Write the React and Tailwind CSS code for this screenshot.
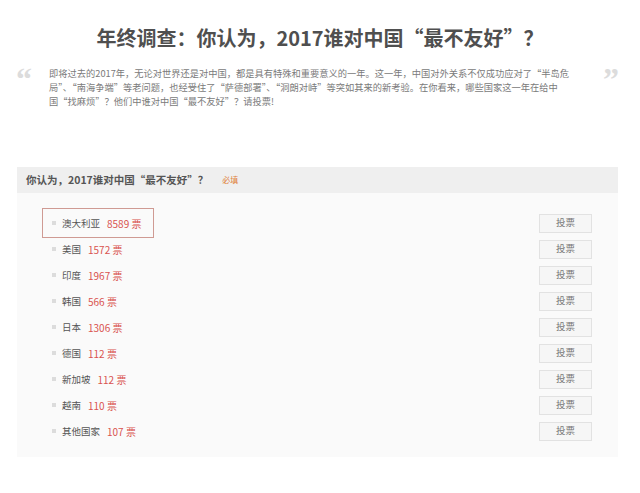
import React from "react";

const OPTIONS = [
  { name: "澳大利亚", votes: 8589, marked: true },
  { name: "美国", votes: 1572 },
  { name: "印度", votes: 1967 },
  { name: "韩国", votes: 566 },
  { name: "日本", votes: 1306 },
  { name: "德国", votes: 112 },
  { name: "新加坡", votes: 112 },
  { name: "越南", votes: 110 },
  { name: "其他国家", votes: 107 },
];

const OptionRow = ({ opt }) => (
  <div className="h-[26px] flex items-center justify-between pl-[25px] pr-[26px]">
    <div
      className={`flex items-center h-[30px] w-[112px] pl-[9px] border ${
        opt.marked ? "border-[#cf9a93]" : "border-transparent"
      }`}
    >
      <span className="w-[4px] h-[4px] bg-[#dcdcdc] mr-[6px]" />
      <span className="text-[9.5px] text-[#555]">{opt.name}</span>
      <span className="ml-[7px] text-[10px] text-[#d9534f]">
        {opt.votes} 票
      </span>
    </div>
    <button className="w-[53px] h-[19px] border border-[#e2e2e2] bg-[#f6f6f6] text-[9.5px] text-[#777] leading-none">
      投票
    </button>
  </div>
);

export default function App() {
  return (
    <div className="w-[640px] h-[493px] bg-white font-['Noto_Sans_CJK_SC',sans-serif]">
      <h1 className="pt-[26px] text-center text-[20px] leading-[24px] font-bold text-[#4f4f4f]">
        年终调查：你认为，2017谁对中国“最不友好”？
      </h1>

      <div className="flex mt-[16px] pl-[16px]">
        <div className="w-[33px] mt-[1px] text-[32px] leading-[24px] font-bold text-[#dcdcdc] font-['Liberation_Serif',serif]">
          “
        </div>
        <div className="w-[554px] text-[9.25px] leading-[14px] text-[#7a7a7a] whitespace-nowrap">
          <div>
            即将过去的2017年，无论对世界还是对中国，都是具有特殊和重要意义的一年。这一年，中国对外关系不仅成功应对了“半岛危
          </div>
          <div>
            局”、“南海争端”等老问题，也经受住了“萨德部署”、“洞朗对峙”等突如其来的新考验。在你看来，哪些国家这一年在给中
          </div>
          <div>国“找麻烦”？他们中谁对中国“最不友好”？请投票!</div>
        </div>
        <div className="w-[20px] mt-[1px] text-[32px] leading-[24px] font-bold text-[#dcdcdc] font-['Liberation_Serif',serif]">
          ”
        </div>
      </div>

      <div className="mx-[17px] mt-[59px] w-[601px] bg-[#fafafa] pb-[13px]">
        <div className="h-[26px] bg-[#efefef] flex items-center pl-[9px]">
          <span className="text-[10.5px] font-bold text-[#555]">
            你认为，2017谁对中国“最不友好”？
          </span>
          <span className="ml-[14px] text-[8px] text-[#e0803a]">必填</span>
        </div>
        <div className="pt-[17px]">
          {OPTIONS.map((opt) => (
            <OptionRow key={opt.name} opt={opt} />
          ))}
        </div>
      </div>
    </div>
  );
}
